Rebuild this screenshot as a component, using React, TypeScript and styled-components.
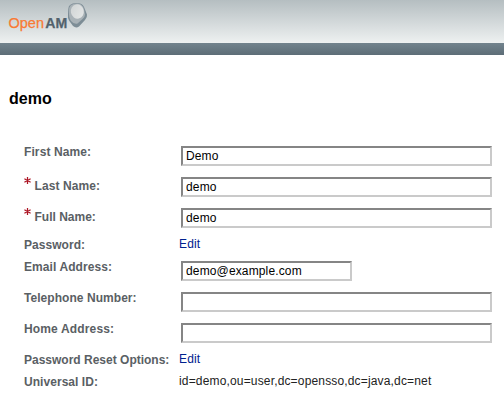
import React from "react";
import styled, { createGlobalStyle } from "styled-components";

const GlobalStyle = createGlobalStyle`
  body {
    margin: 0;
    background: #fff;
    color: #000;
    font: 12px/14px "Liberation Sans", Arial, sans-serif;
  }
`;

const Masthead = styled.header`
  box-sizing: border-box;
  height: 43px;
  padding: 0 8px;
  background: linear-gradient(#b5bec1, #eef1f1);
`;

const NavBar = styled.div`
  height: 12px;
  background: linear-gradient(#72838d, #5d6d77);
`;

const Title = styled.h1`
  margin: 34px 0 0 9px;
  height: 20px;
  font-size: 16px;
  line-height: 20px;
  letter-spacing: 0;
`;

const Form = styled.form`
  margin-top: 32px;
  padding-left: 24px;
`;

const Row = styled.div<{ $compact?: boolean }>`
  display: grid;
  grid-template-columns: 155px 1fr;
  height: ${(p) => (p.$compact ? 22 : 31)}px;
`;

const Label = styled.label<{ $required?: boolean; $spacing: number }>`
  display: flex;
  align-items: flex-start;
  gap: 3.5px;
  padding-top: ${(p) => (p.$required ? 7 : 4)}px;
  color: #5a6064;
  font-weight: bold;
  letter-spacing: ${(p) => p.$spacing}px;
  white-space: nowrap;
`;

const Star = styled.svg`
  width: 7px;
  height: 7px;
  margin-top: -2px;
`;

const Input = styled.input<{ $width: number }>`
  box-sizing: border-box;
  width: ${(p) => p.$width}px;
  height: 20px;
  margin: 5px 0 0 2px;
  padding: 0 3px 1px;
  border: 2px solid;
  border-color: #858585 #cacaca #cacaca #858585;
  border-radius: 0;
  outline: 0;
  background: #fff;
  color: #000;
  font: 12px/15px "Liberation Sans", Arial, sans-serif;
  letter-spacing: 0.14px;
`;

const EditLink = styled.a`
  padding-top: 3px;
  color: #00218e;
  letter-spacing: 0.15px;
  text-decoration: none;
`;

const Value = styled.span`
  padding-top: 3px;
  color: #222;
  letter-spacing: 0.16px;
`;

const LogoArt = styled.svg`
  display: block;
`;

function Logo() {
  return (
    <LogoArt width="84" height="34" role="img" aria-label="OpenAM">
      <defs>
        <linearGradient id="face" x1="0" y1="0" x2="1" y2="1">
          <stop offset="0" stopColor="#cfd3d4" />
          <stop offset="1" stopColor="#e6e8e8" />
        </linearGradient>
      </defs>
      <g fontFamily="Liberation Sans, Arial, sans-serif" fontSize="15.500">
        <text x="0.5" y="27.5" fill="#f97a33" stroke="#f97a33" strokeWidth="0.25" textLength="35.500" lengthAdjust="spacingAndGlyphs">Open</text>
        <text x="37.200" y="27.5" fill="#53626c" stroke="#53626c" strokeWidth="0.25" fontWeight="bold" textLength="22" lengthAdjust="spacingAndGlyphs">AM</text>
      </g>
      <path d="M62 5 Q65 2.500 70 3 Q74.500 3.500 76 7 L79 14.500 Q79.500 17 77 20 L71 26.500 Q68 28.500 65 26 L61 20.500 Q59.500 18 60 14 L60.300 9 Q60.500 6 62 5Z" fill="#7d8d96" />
      <path d="M62.500 5.500 Q66 3 70 3.500 Q74.500 4 76 9 L77 14.500 Q77 17 74.500 19 L69.500 23.500 Q66 24.500 63 21 Q60.500 17 61 11 Q61 7 62.500 5.500Z" fill="#a9b2b7" />
      <ellipse cx="69.300" cy="11.500" rx="6.500" ry="7.200" transform="rotate(-12 69.300 11.500)" fill="url(#face)" />
    </LogoArt>
  );
}

function RequiredMark() {
  return (
    <Star viewBox="0 0 7 7" aria-label="required">
      <path d="M3.500 0V7M0.400 1.700L6.600 5.300M0.400 5.300L6.600 1.700" stroke="#ad1625" strokeWidth="1.250" />
    </Star>
  );
}

type Field = {
  label: string;
  kind: "input" | "link" | "text";
  value?: string;
  width?: number;
  required?: boolean;
  spacing?: number;
};

const fields: Field[] = [
  { label: "First Name:", kind: "input", value: "Demo", spacing: 0.1 },
  { label: "Last Name:", kind: "input", value: "demo", required: true, spacing: 0.1 },
  { label: "Full Name:", kind: "input", value: "demo", required: true },
  { label: "Password:", kind: "link", value: "Edit", spacing: 0.05 },
  { label: "Email Address:", kind: "input", value: "demo@example.com", width: 171, spacing: 0.08 },
  { label: "Telephone Number:", kind: "input", value: "", spacing: 0.05 },
  { label: "Home Address:", kind: "input", value: "", spacing: 0.15 },
  { label: "Password Reset Options:", kind: "link", value: "Edit" },
  { label: "Universal ID:", kind: "text", value: "id=demo,ou=user,dc=opensso,dc=java,dc=net", spacing: 0.05 },
];

export default function App() {
  return (
    <>
      <GlobalStyle />
      <Masthead>
        <Logo />
      </Masthead>
      <NavBar />
      <Title>demo</Title>
      <Form>
        {fields.map((f) => (
          <Row key={f.label} $compact={f.kind !== "input"}>
            <Label $required={f.required} $spacing={f.spacing ?? 0}>
              {f.required && <RequiredMark />}
              {f.label}
            </Label>
            {f.kind === "input" && <Input $width={f.width ?? 311} defaultValue={f.value} />}
            {f.kind === "link" && <EditLink href="#">{f.value}</EditLink>}
            {f.kind === "text" && <Value>{f.value}</Value>}
          </Row>
        ))}
      </Form>
    </>
  );
}
